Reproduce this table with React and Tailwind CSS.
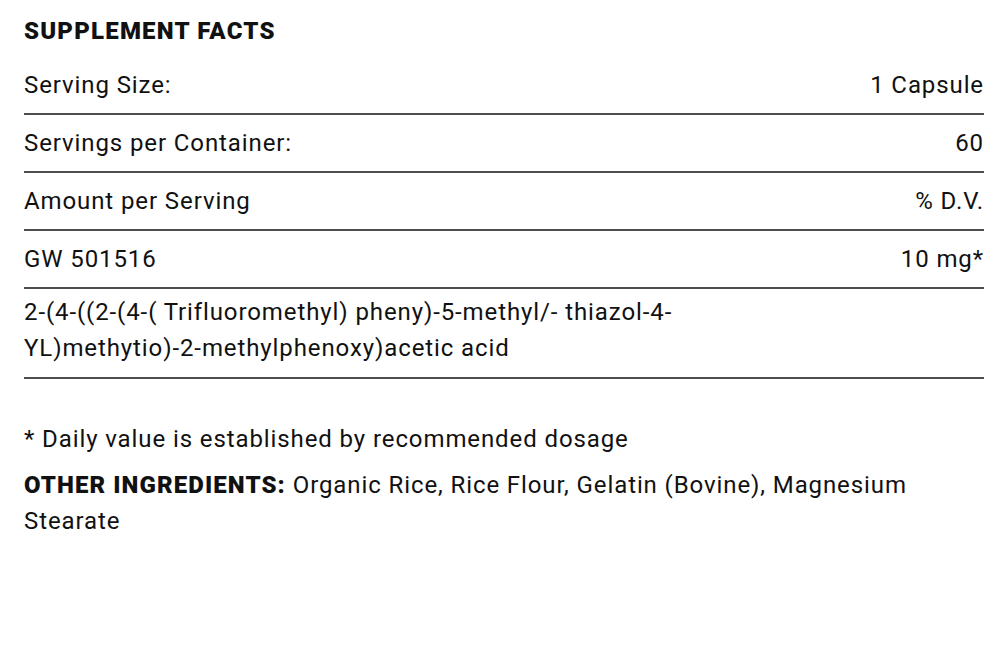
export default function App() {
  const rows = [
    ['Serving Size:', '1 Capsule'],
    ['Servings per Container:', '60'],
    ['Amount per Serving', '% D.V.'],
    ['GW 501516', '10 mg*'],
  ];

  return (
    <div className="min-h-screen bg-white pl-6 pr-4 pt-[13px] text-[24px] leading-9 tracking-[0.9px] text-[#111] font-['Roboto',sans-serif]">
      <h2 className="font-black uppercase tracking-[1.2px]">Supplement Facts</h2>

      <div className="mt-[8px]">
        {rows.map(([label, value]) => (
          <div
            key={label}
            className="flex items-center justify-between border-b-2 border-[#4d4d4d] py-[10px]"
          >
            <span>{label}</span>
            <span>{value}</span>
          </div>
        ))}
        <div className="border-b-2 border-[#4d4d4d] pt-[5px] pb-[11px]">
          2-(4-((2-(4-( Trifluoromethyl) pheny)-5-methyl/- thiazol-4-
          <br />
          YL)methytio)-2-methylphenoxy)acetic acid
        </div>
      </div>

      <p className="mt-[42px]">* Daily value is established by recommended dosage</p>
      <p className="mt-[10px]">
        <span className="font-black tracking-[1.1px]">OTHER INGREDIENTS:</span> Organic Rice, Rice Flour, Gelatin (Bovine), Magnesium
        Stearate
      </p>
    </div>
  );
}
